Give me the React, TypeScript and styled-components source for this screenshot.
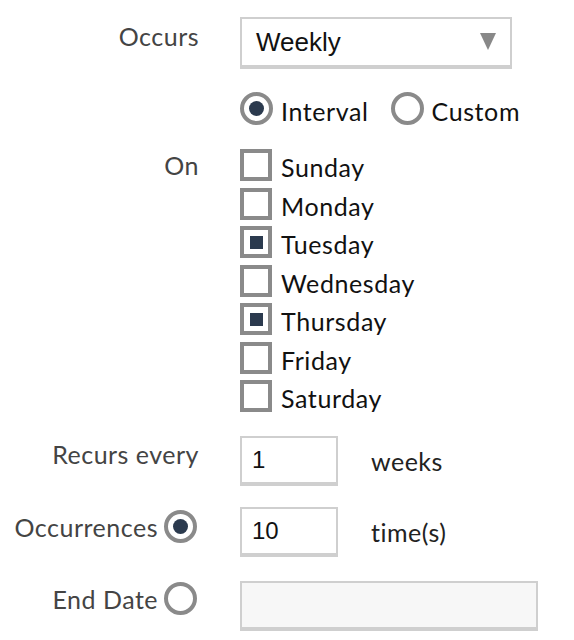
import React from "react";
import styled, { createGlobalStyle } from "styled-components";

const Global = createGlobalStyle`
  html, body { margin: 0; padding: 0; background: #fff; }
  body { font-family: "Lato", "Noto Sans", sans-serif; }
`;

const Form = styled.div`
  width: 574px;
  padding-top: 17px;
  display: flex;
  flex-direction: column;
`;

const Row = styled.div<{ $top?: number }>`
  display: grid;
  grid-template-columns: 200px 1fr;
  column-gap: 40px;
  margin-top: ${(p) => p.$top ?? 0}px;
`;

const Label = styled.div<{ $pad?: number; $radio?: boolean }>`
  display: flex;
  justify-content: flex-end;
  align-items: ${(p) => (p.$radio ? "center" : "flex-start")};
  align-self: flex-start;
  gap: 6px;
  padding-top: ${(p) => p.$pad ?? 0}px;
  padding-right: ${(p) => (p.$radio ? 3 : 1)}px;
  font-size: 25px;
  line-height: 30px;
  letter-spacing: 0.5px;
  color: #444;
`;

const Control = styled.div`
  display: flex;
  align-items: center;
`;

const Select = styled.div`
  box-sizing: border-box;
  width: 272px;
  height: 52px;
  border: 2px solid #cfcfcf;
  border-bottom-width: 4px;
  display: flex;
  align-items: center;
  justify-content: space-between;
  padding: 0 14px 0 14px;
  font-family: "Liberation Sans", Arial, sans-serif;
  font-size: 26px;
  color: #111;
`;

const Arrow = styled.svg`
  width: 16px;
  height: 17px;
  margin-bottom: 2px;
`;

const Options = styled.div`
  display: flex;
  align-items: center;
  gap: 22px;
`;

const Option = styled.label`
  display: flex;
  align-items: center;
  gap: 8px;
  font-size: 25px;
  letter-spacing: 0.6px;
  color: #111;
`;

const OptionText = styled.span`
  line-height: 24px;
  margin-top: 4px;
`;

const Radio = styled.span<{ $on?: boolean }>`
  box-sizing: border-box;
  width: 33px;
  height: 33px;
  border-radius: 50%;
  border: 4px solid #8a8a8a;
  display: flex;
  align-items: center;
  justify-content: center;
  background: #fff;
  flex: none;
  &::after {
    content: "";
    width: 15px;
    height: 15px;
    border-radius: 50%;
    background: ${(p) => (p.$on ? "#2b3a4e" : "transparent")};
  }
`;

const Days = styled.div`
  display: flex;
  flex-direction: column;
  gap: 6.5px;
`;

const Check = styled.span<{ $on?: boolean }>`
  box-sizing: border-box;
  width: 32px;
  height: 32px;
  border: 4px solid #8a8a8a;
  display: flex;
  align-items: center;
  justify-content: center;
  background: #fff;
  flex: none;
  &::after {
    content: "";
    width: 13px;
    height: 13px;
    background: ${(p) => (p.$on ? "#2b3a4e" : "transparent")};
  }
`;

const DayOption = styled(Option)`
  gap: 9px;
  height: 32px;
`;

const Input = styled.div<{ $w: number; $disabled?: boolean }>`
  box-sizing: border-box;
  width: ${(p) => p.$w}px;
  height: 50px;
  border: 2px solid #cfcfcf;
  border-bottom-width: 4px;
  background: ${(p) => (p.$disabled ? "#f7f7f7" : "#fff")};
  display: flex;
  align-items: center;
  padding: 0 10px 0 10px;
  font-family: "Liberation Sans", Arial, sans-serif;
  font-size: 24px;
  color: #111;
`;

const Unit = styled.span`
  margin-left: 33px;
  font-size: 25px;
  letter-spacing: 0.5px;
  color: #222;
`;

const days: [string, boolean][] = [
  ["Sunday", false],
  ["Monday", false],
  ["Tuesday", true],
  ["Wednesday", false],
  ["Thursday", true],
  ["Friday", false],
  ["Saturday", false],
];

export default function App() {
  return (
    <>
      <Global />
      <Form>
        <Row>
          <Label $pad={4}>Occurs</Label>
          <Control>
            <Select>
              <span>Weekly</span>
              <Arrow viewBox="0 0 16 17">
                <polygon points="0,0 16,0 8,17" fill="#888" />
              </Arrow>
            </Select>
          </Control>
        </Row>
        <Row $top={23}>
          <div />
          <Options>
            <Option>
              <Radio $on />
              <OptionText>Interval</OptionText>
            </Option>
            <Option>
              <Radio />
              <OptionText>Custom</OptionText>
            </Option>
          </Options>
        </Row>
        <Row $top={24}>
          <Label $pad={1}>On</Label>
          <Days>
            {days.map(([d, on]) => (
              <DayOption key={d}>
                <Check $on={on} />
                <OptionText>{d}</OptionText>
              </DayOption>
            ))}
          </Days>
        </Row>
        <Row $top={24}>
          <Label $pad={3}>Recurs every</Label>
          <Control>
            <Input $w={98}>1</Input>
            <Unit>weeks</Unit>
          </Control>
        </Row>
        <Row $top={21}>
          <Label $radio $pad={3}>
            Occurrences
            <Radio $on />
          </Label>
          <Control>
            <Input $w={98}>10</Input>
            <Unit>time(s)</Unit>
          </Control>
        </Row>
        <Row $top={24}>
          <Label $radio $pad={1}>
            End Date
            <Radio />
          </Label>
          <Control>
            <Input $w={298} $disabled />
          </Control>
        </Row>
      </Form>
    </>
  );
}
